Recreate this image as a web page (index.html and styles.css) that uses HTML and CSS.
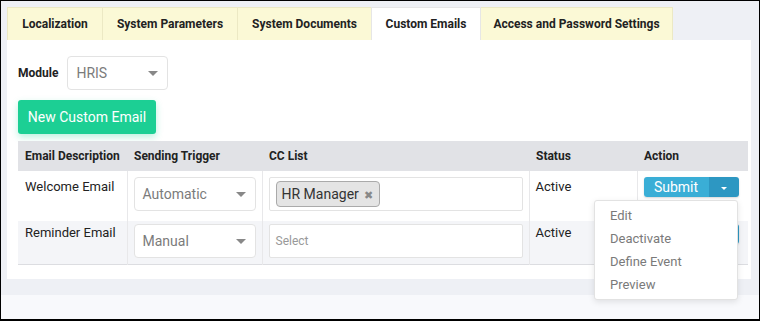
FILE: index.html
```html
<!DOCTYPE html>
<html lang="en">
<head>
    <meta charset="UTF-8">
    <title>Settings - Custom Emails</title>
    <link rel="stylesheet" href="styles.css">
</head>
<body>
    <div class="frame">
        <div class="tabs">
            <div class="tab tab-loc">Localization</div>
            <div class="tab tab-params">System Parameters</div>
            <div class="tab tab-docs">System Documents</div>
            <div class="tab tab-emails active">Custom Emails</div>
            <div class="tab tab-access">Access and Password Settings</div>
        </div>

        <div class="panel">
            <div class="module-row">
                <label class="module-label">Module</label>
                <div class="select module-select">HRIS<span class="caret"></span></div>
            </div>

            <button class="btn-new">New Custom Email</button>

            <table class="email-table">
                <colgroup>
                    <col class="col-desc">
                    <col class="col-trigger">
                    <col class="col-cc">
                    <col class="col-status">
                    <col class="col-action">
                </colgroup>
                <thead>
                    <tr>
                        <th>Email Description</th>
                        <th>Sending Trigger</th>
                        <th>CC List</th>
                        <th>Status</th>
                        <th>Action</th>
                    </tr>
                </thead>
                <tbody>
                    <tr class="row-first">
                        <td>Welcome Email</td>
                        <td><div class="select">Automatic<span class="caret"></span></div></td>
                        <td>
                            <div class="cc-box">
                                <span class="tag">HR Manager <span class="tag-x">&#x2716;</span></span>
                            </div>
                        </td>
                        <td>Active</td>
                        <td>
                            <div class="action-wrap">
                                <div class="btn-group">
                                    <span class="btn-submit">Submit</span>
                                    <span class="btn-caret"><span class="caret white"></span></span>
                                </div>
                                <ul class="dropdown">
                                    <li>Edit</li>
                                    <li>Deactivate</li>
                                    <li>Define Event</li>
                                    <li>Preview</li>
                                </ul>
                            </div>
                        </td>
                    </tr>
                    <tr class="row-second">
                        <td>Reminder Email</td>
                        <td><div class="select">Manual<span class="caret"></span></div></td>
                        <td><div class="cc-box empty">Select</div></td>
                        <td>Active</td>
                        <td>
                            <!-- covered by the open dropdown above -->
                            <div class="btn-group">
                                <span class="btn-submit"></span>
                                <span class="btn-caret"></span>
                            </div>
                        </td>
                    </tr>
                </tbody>
            </table>
        </div>
    </div>
</body>
</html>
```

FILE: styles.css
```css
body {
    margin: 0;
    font-family: Roboto, "Liberation Sans", Arial, sans-serif;
    color: #222;
}

.frame {
    width: 760px;
    height: 321px;
    box-sizing: border-box;
    border: 1px solid #000;
    border-bottom-width: 2px;
    padding: 6px 8px 0 6px;
    background: linear-gradient(to bottom, #eef0f5 0, #eef0f5 294px, #f8f9fc 294px);
    overflow: hidden;
}

/* Tabs */
.tabs {
    display: flex;
    height: 33px;
}

.tab {
    flex: none;
    box-sizing: border-box;
    height: 33px;
    line-height: 33px;
    text-align: center;
    font-size: 12px;
    font-weight: bold;
    color: #222;
    background-color: #fbf9d6;
    border: 1px solid #ece9c4;
    border-bottom: none;
    margin-right: -1px;
}

.tab.active {
    background-color: #fff;
    border-color: #e6e6e6;
    position: relative;
    z-index: 1;
}

.tab-loc { width: 96px; }
.tab-params { width: 136px; }
.tab-docs { width: 135px; }
.tab-emails { width: 110px; }
.tab-access { width: 193px; }

/* Panel */
.panel {
    background-color: #fff;
    height: 239px;
    box-sizing: border-box;
    padding: 16px 10px 0 11px;
}

.module-row {
    display: flex;
    align-items: center;
    gap: 9px;
}

.module-label {
    font-size: 12px;
    font-weight: bold;
}

.select {
    position: relative;
    box-sizing: border-box;
    height: 34px;
    line-height: 32px;
    padding: 0 8px;
    border: 1px solid #e3e3e3;
    border-radius: 4px;
    font-size: 14px;
    color: #7b7b7b;
    background: #fff;
}

.module-select {
    width: 101px;
}

.caret {
    position: absolute;
    right: 9px;
    top: 14px;
    width: 0;
    height: 0;
    border-left: 5px solid transparent;
    border-right: 5px solid transparent;
    border-top: 5px solid #888;
}

.caret.white {
    position: static;
    display: inline-block;
    border-left-width: 3px;
    border-right-width: 3px;
    border-top: 3px solid #fff;
    vertical-align: middle;
}

.btn-new {
    display: block;
    margin-top: 10px;
    width: 138px;
    height: 34px;
    border: none;
    border-radius: 3px;
    background-color: #1ccf94;
    color: #fff;
    font-family: inherit;
    font-size: 14px;
    box-shadow: 0 3px 7px rgba(28, 207, 148, 0.3);
}

/* Table */
.email-table {
    margin-top: 7px;
    width: 730px;
    border-collapse: collapse;
    table-layout: fixed;
    font-size: 13px;
}

.col-desc { width: 109px; }
.col-trigger { width: 135px; }
.col-cc { width: 267px; }
.col-status { width: 108px; }
.col-action { width: 111px; }

.email-table th {
    height: 30px;
    padding: 0 7px;
    text-align: left;
    font-size: 12px;
    background-color: #e1e2e6;
}

.email-table td {
    padding: 6px;
    vertical-align: top;
    border-left: 1px solid #e8e8ea;
}

.email-table td:first-child {
    border-left: none;
    padding-left: 7px;
}

.email-table td:first-child,
.email-table td:nth-child(4) {
    padding-top: 8px;
}

.row-first {
    height: 50px;
}

.row-second {
    height: 43px;
    background-color: #f4f5f8;
    border-bottom: 1px solid #dcdde1;
}

.row-second td {
    padding-top: 3px;
}

.row-second td:first-child,
.row-second td:nth-child(4) {
    padding-top: 4px;
}

.cc-box {
    box-sizing: border-box;
    height: 34px;
    border: 1px solid #e3e3e3;
    border-radius: 2px;
    padding: 3px 6px;
    background: #fff;
}

.cc-box.empty {
    line-height: 26px;
    font-size: 12px;
    color: #999;
}

.tag {
    display: inline-block;
    box-sizing: border-box;
    height: 26px;
    line-height: 24px;
    padding: 0 6px 0 5px;
    border: 1px solid #aaa;
    border-radius: 4px;
    background-color: #e4e4e4;
    font-size: 14px;
    color: #333;
}

.tag-x {
    font-size: 11px;
    color: #888;
    margin-left: 2px;
}

/* Action */
.action-wrap {
    position: relative;
}

.btn-group {
    display: flex;
    width: 95px;
    height: 20px;
    border-radius: 3px;
    overflow: hidden;
    color: #fff;
    font-size: 14px;
    line-height: 20px;
    box-shadow: 0 1px 2px rgba(0, 0, 0, 0.15);
}

.btn-submit {
    width: 65px;
    text-align: center;
    background-color: #3aaed6;
}

.btn-caret {
    width: 30px;
    text-align: center;
    background-color: #2d97c2;
}

.dropdown {
    position: absolute;
    top: 23px;
    right: 4px;
    z-index: 2;
    width: 144px;
    height: 100px;
    box-sizing: border-box;
    margin: 0;
    padding: 3px 0 0;
    list-style: none;
    background: #fff;
    border: 1px solid #e2e2e2;
    border-radius: 3px;
    box-shadow: 0 2px 6px rgba(0, 0, 0, 0.1);
}

.dropdown li {
    height: 23px;
    line-height: 23px;
    padding-left: 15px;
    font-size: 13px;
    color: #7a7a7a;
}
```
